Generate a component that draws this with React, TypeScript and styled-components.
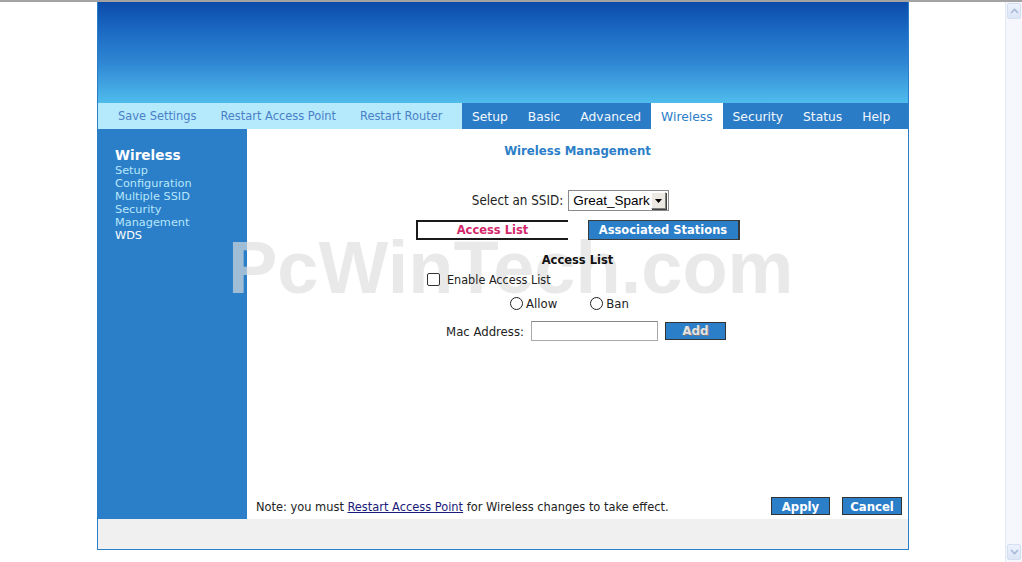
import React from 'react';
import styled, { createGlobalStyle } from 'styled-components';

const V = `"DejaVu Sans", Verdana, sans-serif`;
const T = `"DejaVu Sans Condensed", "DejaVu Sans", Tahoma, sans-serif`;
const BLUE = '#2b7ec8';

const GlobalStyle = createGlobalStyle`
  html, body { margin: 0; padding: 0; background: #fff; overflow: hidden; }
  body { font-family: ${V}; }
  * { box-sizing: border-box; }
`;

const Window = styled.div`
  width: 1022px;
  height: 562px;
  display: flex;
  flex-direction: column;
`;

const TopRule = styled.div`
  height: 2px;
  flex-shrink: 0;
  background: #a3a3a3;
`;

const Viewport = styled.div`
  flex: 1;
  display: flex;
  min-height: 0;
`;

const PageArea = styled.div`
  flex: 1;
  padding-left: 97px;
`;

const Frame = styled.div`
  width: 812px;
  height: 548px;
  display: flex;
  flex-direction: column;
  border: 1px solid ${BLUE};
  border-top: none;
`;

const Header = styled.div`
  height: 101px;
  flex-shrink: 0;
  background: linear-gradient(180deg, #0a4ca9 0%, #1c6bc4 30%, #2f86d3 60%, #4fbcec 100%);
`;

const NavBar = styled.div`
  height: 26px;
  flex-shrink: 0;
  display: flex;
`;

const QuickLinks = styled.div`
  width: 364px;
  background: #b5eafc;
  display: flex;
  align-items: center;
  gap: 24px;
  padding-left: 20px;
  padding-bottom: 1px;
  font-family: ${T};
  font-size: 12.7px;
  color: #4a80c8;
`;

const QuickLink = styled.span`
  white-space: nowrap;
`;

const Tabs = styled.div`
  flex: 1;
  background: #2b7cc7;
  display: flex;
`;

const Tab = styled.div<{ $active?: boolean }>`
  display: flex;
  align-items: center;
  padding: 1px 10px 0;
  font-size: 12.3px;
  white-space: nowrap;
  color: ${(p) => (p.$active ? BLUE : '#f2f7fc')};
  background: ${(p) => (p.$active ? '#fff' : 'transparent')};
`;

const Body = styled.div`
  position: relative;
  height: 390px;
  flex-shrink: 0;
  display: flex;
  background: #fff;
`;

const Sidebar = styled.div`
  width: 149px;
  flex-shrink: 0;
  background: ${BLUE};
  padding: 17px 0 0 17px;
  display: flex;
  flex-direction: column;
`;

const SideTitle = styled.div`
  font-size: 13.6px;
  font-weight: bold;
  color: #fff;
  line-height: 18px;
`;

const SideItem = styled.div<{ $current?: boolean }>`
  font-size: 11.3px;
  line-height: 13px;
  color: ${(p) => (p.$current ? '#ffffff' : '#b6e7fb')};
`;

const Watermark = styled.div`
  position: absolute;
  left: 130px;
  top: 102px;
  z-index: 0;
  font-family: "Liberation Sans", Arial, sans-serif;
  font-weight: bold;
  font-size: 74px;
  line-height: 1;
  color: rgba(222, 222, 222, 0.66);
  white-space: nowrap;
  pointer-events: none;
`;

const Content = styled.div`
  position: relative;
  z-index: 1;
  flex: 1;
  display: flex;
  flex-direction: column;
  align-items: center;
`;

const PageTitle = styled.div`
  margin-top: 14px;
  font-family: ${T};
  font-size: 13px;
  line-height: 16px;
  font-weight: bold;
  color: ${BLUE};
`;

const Row = styled.div<{ $mt: number; $shift?: number }>`
  display: flex;
  align-items: center;
  margin-top: ${(p) => p.$mt}px;
  padding-left: ${(p) => Math.max(0, p.$shift ?? 0)}px;
  padding-right: ${(p) => Math.max(0, -(p.$shift ?? 0))}px;
`;

const Label = styled.span`
  font-family: ${T};
  font-size: 13px;
  color: #222;
  white-space: nowrap;
`;

const SsidLabel = styled(Label)`
  font-size: 13.3px;
`;

const SelectBox = styled.div`
  margin-left: 5px;
  width: 101px;
  height: 21px;
  border: 1px solid #8a8a8a;
  background: #fff;
  display: flex;
  align-items: center;
  padding: 1px;
`;

const SelectText = styled.span`
  flex: 1;
  font-family: "Liberation Sans", Arial, sans-serif;
  font-size: 13.5px;
  color: #000;
  padding-left: 3px;
  white-space: nowrap;
  overflow: hidden;
`;

const SelectArrow = styled.div`
  width: 15px;
  height: 17px;
  flex-shrink: 0;
  background: #ece9e3;
  border: 1px solid;
  border-color: #fff #808080 #808080 #fff;
  box-shadow: 1px 1px 0 #404040;
  display: flex;
  align-items: center;
  justify-content: center;
  margin-right: 1px;
`;

const PanelTabs = styled.div`
  display: flex;
  gap: 20px;
  margin-top: 9px;
`;

const PanelTab = styled.div<{ $active?: boolean }>`
  width: 152px;
  height: 20px;
  display: flex;
  align-items: center;
  justify-content: center;
  font-family: ${V};
  font-size: 11.5px;
  font-weight: bold;
  white-space: nowrap;
  color: ${(p) => (p.$active ? '#d4286b' : '#fff')};
  background: ${(p) => (p.$active ? '#fff' : BLUE)};
  border: ${(p) => (p.$active ? '2px solid #1a1a1a' : '1px solid #3a3a3a')};
  border-right: ${(p) => (p.$active ? 'none' : '2px solid #3a3a3a')};
`;

const SectionTitle = styled.div`
  margin-top: 13px;
  font-family: ${V};
  font-size: 11.5px;
  line-height: 15px;
  font-weight: bold;
  color: #111;
`;

const CheckRow = styled.div`
  align-self: flex-start;
  margin-top: 4px;
  margin-left: 180px;
  display: flex;
  align-items: center;
  gap: 7px;
`;

const CheckLabel = styled(Label)`
  font-size: 12.5px;
`;

const Checkbox = styled.span`
  width: 13px;
  height: 13px;
  border: 1px solid #333;
  border-radius: 2px;
  background: #fff;
`;

const RadioGroup = styled.label<{ $gapBefore?: number }>`
  display: flex;
  align-items: center;
  gap: 3px;
  margin-left: ${(p) => p.$gapBefore ?? 0}px;
`;

const Radio = styled.span`
  width: 13px;
  height: 13px;
  border: 1px solid #222;
  border-radius: 50%;
  background: #fff;
`;

const TextInput = styled.div`
  margin-left: 7px;
  width: 127px;
  height: 20px;
  border: 1px solid #a8a8a8;
  border-top-color: #888;
  background: #fff;
`;

const SmallButton = styled.div`
  margin-left: 7px;
  width: 61px;
  height: 18px;
  background: ${BLUE};
  border: 1px solid #333;
  display: flex;
  align-items: center;
  justify-content: center;
  font-family: ${V};
  font-size: 12px;
  font-weight: bold;
  color: #e4e4e4;
  text-shadow: 1px 1px 0 #7a7a7a;
`;

const BottomBar = styled.div`
  margin-top: auto;
  align-self: stretch;
  display: flex;
  align-items: center;
  padding: 0 6px 4px 9px;
`;

const Note = styled.span`
  flex: 1;
  font-family: ${T};
  font-size: 12.7px;
  color: #222;
  white-space: nowrap;
`;

const NoteLink = styled.a`
  color: #1a1a7a;
  text-decoration: underline;
`;

const ActionButton = styled.div<{ $w: number }>`
  width: ${(p) => p.$w}px;
  height: 18px;
  margin-left: 12px;
  background: ${BLUE};
  border: 1px solid #333;
  display: flex;
  align-items: center;
  justify-content: center;
  font-family: ${T};
  font-size: 13px;
  font-weight: bold;
  color: #fff;
`;

const Footer = styled.div`
  flex: 1;
  background: #f0f0f0;
`;

const Scrollbar = styled.div`
  width: 17px;
  flex-shrink: 0;
  display: flex;
  flex-direction: column;
  justify-content: space-between;
  background: #f5f7fd;
  border-left: 1px solid #e2e8f5;
  padding: 1px 1px 2px 1px;
`;

const ScrollButton = styled.div`
  height: 16px;
  border: 1px solid #d3def0;
  border-radius: 2px;
  background: linear-gradient(180deg, #edf2fc 0%, #dbe5f6 100%);
  display: flex;
  align-items: center;
  justify-content: center;
`;

const Chevron = ({ up }: { up?: boolean }) => (
  <svg width="9" height="6" viewBox="0 0 9 6">
    <path
      d={up ? 'M1 5 L4.5 1.5 L8 5' : 'M1 1 L4.5 4.5 L8 1'}
      fill="none"
      stroke="#a7b9d8"
      strokeWidth="1.6"
    />
  </svg>
);

const DownTriangle = () => (
  <svg width="7" height="4" viewBox="0 0 7 4">
    <path d="M0 0 H7 L3.5 4 Z" fill="#000" />
  </svg>
);

const quickLinks = ['Save Settings', 'Restart Access Point', 'Restart Router'];
const tabs = ['Setup', 'Basic', 'Advanced', 'Wireless', 'Security', 'Status', 'Help'];
const sideItems = ['Setup', 'Configuration', 'Multiple SSID', 'Security', 'Management', 'WDS'];

export default function App() {
  return (
    <Window>
      <GlobalStyle />
      <TopRule />
      <Viewport>
        <PageArea>
          <Frame>
            <Header />
            <NavBar>
              <QuickLinks>
                {quickLinks.map((l) => (
                  <QuickLink key={l}>{l}</QuickLink>
                ))}
              </QuickLinks>
              <Tabs>
                {tabs.map((t) => (
                  <Tab key={t} $active={t === 'Wireless'}>
                    {t}
                  </Tab>
                ))}
              </Tabs>
            </NavBar>
            <Body>
              <Sidebar>
                <SideTitle>Wireless</SideTitle>
                {sideItems.map((s) => (
                  <SideItem key={s} $current={s === 'WDS'}>
                    {s}
                  </SideItem>
                ))}
              </Sidebar>
              <Watermark>PcWinTech.com</Watermark>
              <Content>
                <PageTitle>Wireless Management</PageTitle>
                <Row $mt={31} $shift={-14}>
                  <SsidLabel>Select an SSID:</SsidLabel>
                  <SelectBox>
                    <SelectText>Great_Spark</SelectText>
                    <SelectArrow>
                      <DownTriangle />
                    </SelectArrow>
                  </SelectBox>
                </Row>
                <PanelTabs>
                  <PanelTab $active>Access List</PanelTab>
                  <PanelTab>Associated Stations</PanelTab>
                </PanelTabs>
                <SectionTitle>Access List</SectionTitle>
                <CheckRow>
                  <Checkbox />
                  <CheckLabel>Enable Access List</CheckLabel>
                </CheckRow>
                <Row $mt={9} $shift={-16}>
                  <RadioGroup>
                    <Radio />
                    <Label>Allow</Label>
                  </RadioGroup>
                  <RadioGroup $gapBefore={33}>
                    <Radio />
                    <Label>Ban</Label>
                  </RadioGroup>
                </Row>
                <Row $mt={10} $shift={17}>
                  <Label>Mac Address:</Label>
                  <TextInput />
                  <SmallButton>Add</SmallButton>
                </Row>
                <BottomBar>
                  <Note>
                    Note: you must <NoteLink href="#">Restart Access Point</NoteLink> for Wireless changes to take effect.
                  </Note>
                  <ActionButton $w={59}>Apply</ActionButton>
                  <ActionButton $w={60}>Cancel</ActionButton>
                </BottomBar>
              </Content>
            </Body>
            <Footer />
          </Frame>
        </PageArea>
        <Scrollbar>
          <ScrollButton>
            <Chevron up />
          </ScrollButton>
          <ScrollButton>
            <Chevron />
          </ScrollButton>
        </Scrollbar>
      </Viewport>
    </Window>
  );
}
